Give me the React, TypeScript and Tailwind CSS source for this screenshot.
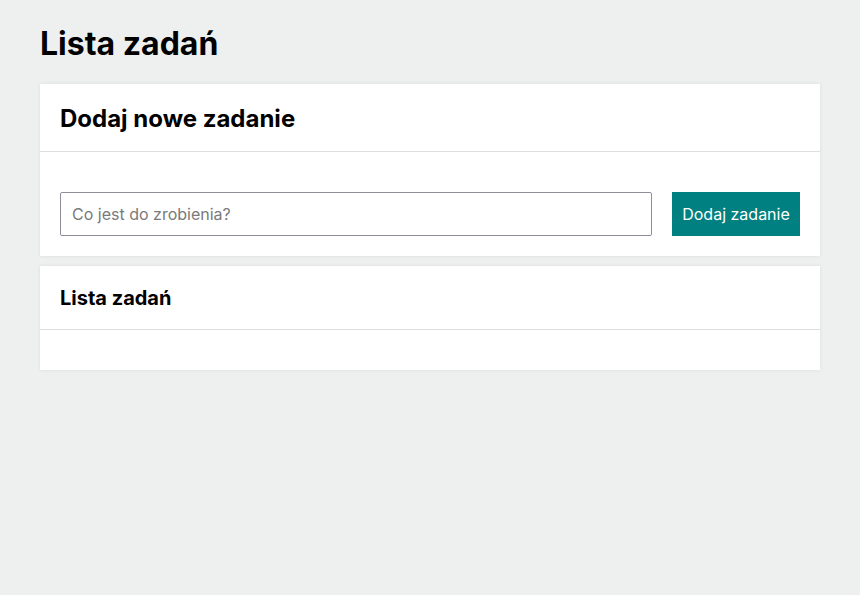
export default function App() {
  return (
    <div className="min-h-screen bg-[#eef0ef] px-10 pt-6 font-['Inter',sans-serif] text-black">
      <h1 className="text-[32px] leading-[40px] font-bold mb-5">Lista zadań</h1>

      <section className="bg-white shadow-[0_0_4px_rgba(0,0,0,0.08)]">
        <div className="px-5 pt-[17px] pb-[14px] border-b border-[#dedede]">
          <h2 className="text-[24px] leading-[36px] font-bold">Dodaj nowe zadanie</h2>
        </div>
        <form className="flex items-stretch gap-5 px-5 pt-10 pb-5" onSubmit={(e) => e.preventDefault()}>
          <input
            type="text"
            placeholder="Co jest do zrobienia?"
            className="flex-1 h-11 px-[11px] border border-[#8f8d9c] rounded-[2px] text-base text-black placeholder:text-[#7a7a7a] outline-none"
          />
          <button type="submit" className="w-32 h-11 bg-[#008080] text-white text-base">
            Dodaj zadanie
          </button>
        </form>
      </section>

      <section className="mt-2.5 bg-white shadow-[0_0_4px_rgba(0,0,0,0.08)]">
        <div className="px-5 pt-[17px] pb-4 border-b border-[#dedede]">
          <h2 className="text-[20px] leading-[30px] font-bold">Lista zadań</h2>
        </div>
        <ul className="h-10"></ul>
      </section>
    </div>
  );
}
